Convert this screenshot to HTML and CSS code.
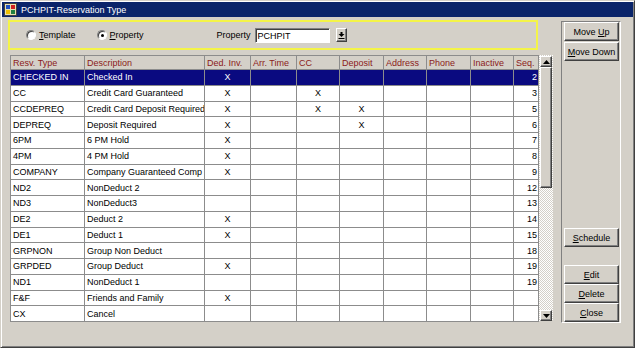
FILE: index.html
```html
<!DOCTYPE html>
<html lang="en">
<head>
  <meta charset="UTF-8" />
  <title>PCHPIT-Reservation Type</title>
  <link rel="stylesheet" href="styles.css">
</head>
<body>
  <div class="window">
    <!-- Title bar -->
    <div class="titlebar">
      <svg class="app-icon" width="13" height="13" viewBox="0 0 13 13">
        <rect x="0.5" y="0.5" width="12" height="12" fill="#e8e0b0" stroke="#404040"/>
        <rect x="2" y="2" width="4" height="4" fill="#2050c0"/>
        <rect x="7" y="2" width="4" height="4" fill="#d02020"/>
        <rect x="2" y="7" width="4" height="4" fill="#f0c000"/>
        <rect x="7" y="7" width="4" height="4" fill="#208040"/>
      </svg>
      <span>PCHPIT-Reservation Type</span>
    </div>

    <div class="client">
      <div class="main">
        <!-- Filter box -->
        <div class="filter">
          <label class="radio"><span class="dot"></span><span><u>T</u>emplate</span></label>
          <label class="radio checked"><span class="dot"></span><span><u>P</u>roperty</span></label>
          <span class="prop-label">Property</span>
          <span class="textbox">PCHPIT</span>
          <span class="drop-btn">
            <svg width="7" height="8" viewBox="0 0 7 8">
              <polygon points="0.5,3 6.5,3 3.5,6" fill="#000"/>
              <rect x="2.5" y="1" width="2" height="2" fill="#000"/>
              <rect x="0.5" y="7" width="6" height="1" fill="#000"/>
            </svg>
          </span>
        </div>

        <!-- Grid -->
        <div class="grid">
          <table>
            <colgroup>
              <col style="width:74px"><col style="width:120px"><col style="width:46px"><col style="width:46px"><col style="width:43px">
              <col style="width:44px"><col style="width:43px"><col style="width:44px"><col style="width:43px"><col style="width:25px">
            </colgroup>
            <thead>
              <tr>
                <th>Resv. Type</th><th>Description</th><th>Ded. Inv.</th><th>Arr. Time</th><th>CC</th>
                <th>Deposit</th><th>Address</th><th>Phone</th><th>Inactive</th><th>Seq.</th>
              </tr>
            </thead>
            <tbody>
              <tr class="selected"><td>CHECKED IN</td><td>Checked In</td><td class="c">X</td><td></td><td></td><td></td><td></td><td></td><td></td><td class="r">2</td></tr>
              <tr><td>CC</td><td>Credit Card Guaranteed</td><td class="c">X</td><td></td><td class="c">X</td><td></td><td></td><td></td><td></td><td class="r">3</td></tr>
              <tr><td>CCDEPREQ</td><td>Credit Card Deposit Required</td><td class="c">X</td><td></td><td class="c">X</td><td class="c">X</td><td></td><td></td><td></td><td class="r">5</td></tr>
              <tr><td>DEPREQ</td><td>Deposit Required</td><td class="c">X</td><td></td><td></td><td class="c">X</td><td></td><td></td><td></td><td class="r">6</td></tr>
              <tr><td>6PM</td><td>6 PM Hold</td><td class="c">X</td><td></td><td></td><td></td><td></td><td></td><td></td><td class="r">7</td></tr>
              <tr><td>4PM</td><td>4 PM Hold</td><td class="c">X</td><td></td><td></td><td></td><td></td><td></td><td></td><td class="r">8</td></tr>
              <tr><td>COMPANY</td><td>Company Guaranteed Comp</td><td class="c">X</td><td></td><td></td><td></td><td></td><td></td><td></td><td class="r">9</td></tr>
              <tr><td>ND2</td><td>NonDeduct 2</td><td></td><td></td><td></td><td></td><td></td><td></td><td></td><td class="r">12</td></tr>
              <tr><td>ND3</td><td>NonDeduct3</td><td></td><td></td><td></td><td></td><td></td><td></td><td></td><td class="r">13</td></tr>
              <tr><td>DE2</td><td>Deduct 2</td><td class="c">X</td><td></td><td></td><td></td><td></td><td></td><td></td><td class="r">14</td></tr>
              <tr><td>DE1</td><td>Deduct 1</td><td class="c">X</td><td></td><td></td><td></td><td></td><td></td><td></td><td class="r">15</td></tr>
              <tr><td>GRPNON</td><td>Group Non Deduct</td><td></td><td></td><td></td><td></td><td></td><td></td><td></td><td class="r">18</td></tr>
              <tr><td>GRPDED</td><td>Group Deduct</td><td class="c">X</td><td></td><td></td><td></td><td></td><td></td><td></td><td class="r">19</td></tr>
              <tr><td>ND1</td><td>NonDeduct 1</td><td></td><td></td><td></td><td></td><td></td><td></td><td></td><td class="r">19</td></tr>
              <tr><td>F&amp;F</td><td>Friends and Family</td><td class="c">X</td><td></td><td></td><td></td><td></td><td></td><td></td><td class="r"></td></tr>
              <tr><td>CX</td><td>Cancel</td><td></td><td></td><td></td><td></td><td></td><td></td><td></td><td class="r"></td></tr>
            </tbody>
          </table>

          <!-- Vertical scrollbar -->
          <div class="vscroll">
            <span class="sb-btn">
              <svg width="7" height="4" viewBox="0 0 7 4"><polygon points="3.5,0 7,4 0,4" fill="#000"/></svg>
            </span>
            <span class="sb-thumb"></span>
            <span class="sb-track"></span>
            <span class="sb-btn">
              <svg width="7" height="4" viewBox="0 0 7 4"><polygon points="0,0 7,0 3.5,4" fill="#000"/></svg>
            </span>
          </div>
        </div>
      </div>

      <!-- Button panel -->
      <div class="side">
        <button class="btn">Move <u>U</u>p</button>
        <button class="btn next"><u>M</u>ove Down</button>
        <button class="btn schedule"><u>S</u>chedule</button>
        <button class="btn edit"><u>E</u>dit</button>
        <button class="btn"><u>D</u>elete</button>
        <button class="btn"><u>C</u>lose</button>
      </div>
    </div>
  </div>
</body>
</html>
```

FILE: styles.css
```css
/* Page */
body {
  margin: 0;
  background: #d4d0c8;
  font-family: 'Liberation Sans', Arial, sans-serif;
  font-size: 9px;
  color: #000;
}

u {
  text-decoration: underline;
}

/* Window frame */
.window {
  width: 635px;
  height: 348px;
  box-sizing: border-box;
  padding: 1px;
  border: 1px solid;
  border-color: #d4d0c8 #404040 #404040 #d4d0c8;
  box-shadow: inset 1px 1px #fff, inset -1px -1px #808080;
  background: #d4d0c8;
  overflow: hidden;
}

.titlebar {
  height: 15px;
  background: #0a246a;
  color: #fff;
  display: flex;
  align-items: center;
  gap: 4px;
  padding-left: 2px;
  font-size: 9px;
  white-space: nowrap;
}

.app-icon {
  flex: none;
}

/* Client area */
.client {
  display: flex;
  padding: 3px 0 0 6px;
}

.main {
  width: 545px;
  display: flex;
  flex-direction: column;
}

/* Filter box */
.filter {
  width: 530px;
  height: 30px;
  box-sizing: border-box;
  border: 2px solid #f4f448;
  display: flex;
  align-items: center;
  padding-left: 16px;
}

.radio {
  display: flex;
  align-items: center;
  gap: 3px;
}

.radio + .radio {
  margin-left: 21px;
}

.dot {
  width: 10px;
  height: 10px;
  box-sizing: border-box;
  border-radius: 50%;
  background: #fff;
  border: 1px solid;
  border-color: #808080 #fff #fff #808080;
  box-shadow: inset 1px 1px #404040;
  position: relative;
}

.radio.checked .dot::after {
  content: "";
  position: absolute;
  left: 3px;
  top: 3px;
  width: 3px;
  height: 3px;
  border-radius: 50%;
  background: #000;
}

.prop-label {
  margin-left: 73px;
}

.textbox {
  margin-left: 4px;
  width: 75px;
  height: 15px;
  box-sizing: border-box;
  background: #fff;
  border: 1px solid;
  border-color: #808080 #fff #fff #808080;
  box-shadow: inset 1px 1px #404040;
  padding: 1px 2px;
  line-height: 12px;
}

.drop-btn {
  margin-left: 6px;
  width: 11px;
  height: 14px;
  box-sizing: border-box;
  border: 1px solid;
  border-color: #fff #404040 #404040 #fff;
  box-shadow: inset -1px -1px #808080;
  display: flex;
  align-items: center;
  justify-content: center;
}

/* Grid */
.grid {
  display: flex;
  margin: 5px 0 0 2px;
  height: 266px;
}

table {
  width: 529px;
  table-layout: fixed;
  border-collapse: collapse;
  background: #fff;
  align-self: flex-start;
}

th, td {
  border: 1px solid #8c8c8c;
  padding: 0 2px;
  white-space: nowrap;
  overflow: hidden;
  text-align: left;
  font-weight: normal;
}

thead tr {
  height: 14px;
}

th {
  background: #d4d0c8;
  color: #8b1a1a;
}

tbody tr {
  height: 15.75px;
}

td.c {
  text-align: center;
}

td.r {
  text-align: right;
  padding-right: 1px;
}

tr.selected td {
  background: #0a0a80;
  color: #fff;
}

/* Scrollbar */
.vscroll {
  width: 14px;
  box-sizing: border-box;
  padding: 1px 1px 0 1px;
  display: flex;
  flex-direction: column;
  background: repeating-conic-gradient(#fff 0 25%, #d4d0c8 0 50%) 0 0 / 2px 2px;
}

.sb-btn, .sb-thumb {
  flex: none;
  box-sizing: border-box;
  background: #d4d0c8;
  border: 1px solid;
  border-color: #fff #404040 #404040 #fff;
  box-shadow: inset -1px -1px #808080;
}

.sb-btn {
  height: 11px;
  display: flex;
  align-items: center;
  justify-content: center;
}

.sb-thumb {
  height: 121px;
}

.sb-track {
  flex: 1;
}

/* Button panel */
.side {
  margin: 1px 0 0 8px;
  width: 60px;
  height: 302px;
  box-sizing: border-box;
  padding: 0 1px 0 2px;
  border: 1px solid;
  border-color: #808080 #fff #fff #808080;
  display: flex;
  flex-direction: column;
}

.btn {
  width: 55px;
  height: 19px;
  box-sizing: border-box;
  padding: 0;
  font-family: inherit;
  font-size: 9px;
  color: #000;
  background: #d4d0c8;
  border: 1px solid;
  border-color: #fff #404040 #404040 #fff;
  box-shadow: inset -1px -1px #808080;
  white-space: nowrap;
}

.btn.next {
  margin-top: 1px;
}

.btn.schedule {
  margin-top: 167px;
}

.btn.edit {
  margin-top: 18px;
}
```
